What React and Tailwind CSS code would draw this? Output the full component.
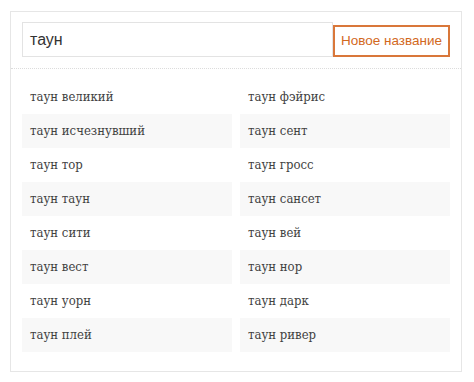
export default function App() {
  const left = ["таун великий","таун исчезнувший","таун тор","таун таун","таун сити","таун вест","таун уорн","таун плей"];
  const right = ["таун фэйрис","таун сент","таун гросс","таун сансет","таун вей","таун нор","таун дарк","таун ривер"];
  const rows = [];
  left.forEach((l, i) => {
    rows.push({ k: "l" + i, t: l, alt: i % 2 === 1 });
    rows.push({ k: "r" + i, t: right[i], alt: i % 2 === 1 });
  });
  return (
    <div className="w-[474px] h-[382px] bg-white pt-[11px] pl-[10px]">
      <div className="w-[452px] h-[361px] border border-[#e6e6e6] flex flex-col">
        <div className="flex px-[11px] pt-[10px] pb-[11px] border-b border-dotted border-[#dcdcdc]">
          <div className="flex-1 h-[35px] border border-[#e3e3e3] flex items-center pl-[7px] text-[16px] text-[#333] font-['Liberation_Sans',sans-serif]">таун</div>
          <div className="mt-[3px] w-[117px] h-[32px] border-2 border-[#d9773a] flex items-center justify-center text-[13.5px] text-[#d2691e] font-['Liberation_Sans',sans-serif]">Новое название</div>
        </div>
        <div className="grid grid-cols-2 gap-x-[8px] px-[11px] pt-[11px]">
          {rows.map((r) => (
            <div
              key={r.k}
              className={r.alt
                ? "h-[34px] flex items-center pl-[8px] text-[13px] text-[#424242] font-['DejaVu_Serif_Condensed',serif] bg-[#f8f8f8]"
                : "h-[34px] flex items-center pl-[8px] text-[13px] text-[#424242] font-['DejaVu_Serif_Condensed',serif]"}
            >
              {r.t}
            </div>
          ))}
        </div>
      </div>
    </div>
  );
}
